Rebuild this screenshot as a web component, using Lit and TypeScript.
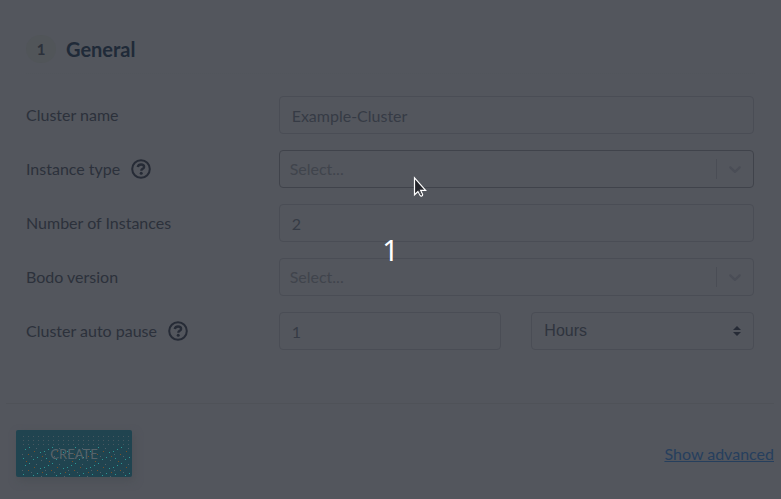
import { LitElement, html, css } from "lit";
import { customElement } from "lit/decorators.js";

const helpIcon = html`<svg class="help" viewBox="0 0 20 20" aria-hidden="true">
  <circle cx="10" cy="10" r="8.8" fill="none" stroke="currentColor" stroke-width="2" />
  <path d="M6.7 8C7.2 6.300 8.300 5.500 10 5.500c1.800 0 3.100.9 3.100 2.400 0 2-2.700 1.900-2.800 3.800" fill="none" stroke="currentColor" stroke-width="2.400" />
  <circle cx="10.200" cy="14.200" r="1.500" fill="currentColor" />
</svg>`;

const chevron = html`<svg class="chevron" viewBox="0 0 20 20" aria-hidden="true">
  <path fill="currentColor" d="M4.516 7.548c0.436-0.446 1.043-0.481 1.576 0l3.908 3.747 3.908-3.747c0.533-0.481 1.141-0.446 1.574 0 0.436 0.445 0.408 1.197 0 1.615-0.406 0.418-4.695 4.502-4.695 4.502-0.217 0.223-0.502 0.335-0.787 0.335s-0.57-0.112-0.789-0.335c0 0-4.287-4.084-4.695-4.502s-0.436-1.17 0-1.615z" />
</svg>`;

@customElement("app-root")
export class AppRoot extends LitElement {
  static styles = css`
    :host {
      display: block;
      position: relative;
      min-height: 100vh;
      background: #53565d;
      color: #2c313b;
      font: 16px/24px Lato, "Open Sans", sans-serif;
    }
    * {
      box-sizing: border-box;
    }
    .heading {
      display: flex;
      align-items: center;
      gap: 10px;
      padding: 35px 26px 10px;
    }
    .step {
      display: grid;
      place-items: center;
      width: 30px;
      height: 28px;
      border-radius: 50%;
      background: #515559;
      font-weight: 700;
      font-size: 15px;
    }
    h2 {
      margin: 0;
      font-size: 20px;
      line-height: 28px;
      font-weight: 700;
      color: #202a38;
    }
    .rule {
      height: 0;
      margin: 0 26px;
      border: 0;
      border-top: 1px dotted #51555b;
    }
    .fields {
      display: grid;
      gap: 16px;
      padding: 22px 12px 53px 11px;
    }
    .row {
      display: grid;
      grid-template-columns: 1fr 2fr;
      align-items: center;
    }
    .label {
      display: flex;
      align-items: center;
      gap: 11px;
      padding: 0 15px;
    }
    .control {
      display: grid;
      grid-auto-flow: column;
      grid-auto-columns: 1fr;
      gap: 30px;
      padding: 0 15px;
    }
    .help {
      width: 20px;
      height: 20px;
      color: #262b36;
    }
    input,
    select {
      width: 100%;
      min-width: 0;
      height: 38px;
      margin: 0;
      border: 1px solid #4a4d55;
      border-radius: 4px;
      background: transparent;
      color: #363b45;
      font: inherit;
      appearance: none;
      outline: none;
    }
    input {
      padding: 0 12px;
    }
    select {
      padding: 0 10px;
    }
    .picker {
      position: relative;
    }
    .picker select {
      color: #40444c;
    }
    .picker.active select {
      border-color: #40434b;
    }
    .picker.unit select {
      padding: 0 12px;
      color: #2f343e;
      font-family: "Liberation Sans", Arial, sans-serif;
    }
    .indicator {
      position: absolute;
      top: 9px;
      right: 0;
      display: grid;
      place-items: center;
      width: 38px;
      height: 20px;
      padding-right: 2px;
      border-left: 1px solid #4a4d55;
      color: #4a4d56;
      pointer-events: none;
    }
    .chevron {
      width: 20px;
      height: 20px;
    }
    .sorter {
      position: absolute;
      top: 14px;
      right: 13px;
      width: 8px;
      height: 10px;
      color: #262b36;
      pointer-events: none;
    }
    .foot {
      display: flex;
      align-items: center;
      justify-content: space-between;
      margin: 0 7px 0 6px;
      padding: 26px 0 20px 10px;
      border-top: 1px solid #4f5258;
    }
    button {
      position: relative;
      width: 116px;
      height: 47px;
      border: 0;
      border-radius: 2px;
      background: #204450;
      box-shadow: 2px 4px 8px #4c5056;
      color: #56636a;
      font: 13px/20px Lato, sans-serif;
    }
    .grain {
      position: absolute;
      inset: 0;
      width: 100%;
      height: 100%;
    }
    .caption {
      position: relative;
    }
    a {
      color: #263f5d;
      text-decoration: underline;
    }
    .count {
      position: absolute;
      inset: 0;
      display: grid;
      place-items: center;
      color: #fff;
      font: 29px/40px "Noto Sans", "Open Sans", sans-serif;
      pointer-events: none;
    }
    .cursor {
      position: absolute;
      left: 413px;
      top: 176px;
      width: 14px;
      height: 22px;
      pointer-events: none;
    }
  `;

  private picker(id: string, active = false) {
    return html`<div class="control">
      <div class="picker ${active ? "active" : ""}">
        <select id=${id}><option>Select...</option></select>
        <span class="indicator">${chevron}</span>
      </div>
    </div>`;
  }

  render() {
    return html`
      <form @submit=${(e: Event) => e.preventDefault()}>
        <div class="heading"><span class="step">1</span><h2>General</h2></div>
        <hr class="rule" />
        <div class="fields">
          <div class="row">
            <div class="label"><label for="name">Cluster name</label></div>
            <div class="control"><input id="name" type="text" value="Example-Cluster" /></div>
          </div>
          <div class="row">
            <div class="label"><label for="type">Instance type</label>${helpIcon}</div>
            ${this.picker("type", true)}
          </div>
          <div class="row">
            <div class="label"><label for="count">Number of Instances</label></div>
            <div class="control"><input id="count" type="text" inputmode="numeric" value="2" /></div>
          </div>
          <div class="row">
            <div class="label"><label for="version">Bodo version</label></div>
            ${this.picker("version")}
          </div>
          <div class="row">
            <div class="label"><label for="pause">Cluster auto pause</label>${helpIcon}</div>
            <div class="control">
              <input id="pause" type="text" inputmode="numeric" value="1" />
              <div class="picker unit">
                <select aria-label="Pause unit"><option>Hours</option></select>
                <svg class="sorter" viewBox="0 0 8 10" aria-hidden="true">
                  <path fill="currentColor" d="M4 0l4 4H0zM0 6h8l-4 4z" />
                </svg>
              </div>
            </div>
          </div>
        </div>
        <div class="foot">
          <button type="submit">
            <svg class="grain" shape-rendering="crispEdges" aria-hidden="true">
              <defs>
                <pattern id="top" width="5" height="4" patternUnits="userSpaceOnUse">
                  <path d="M2 2h1v1H2z" fill="#47575f" />
                </pattern>
                <pattern id="low" width="23" height="16" patternUnits="userSpaceOnUse">
                  <path d="M1 6h1v1H1zM5 5h1v1H5zM9 3h1v1H9zM13 1h1v1h-1zM17 13h1v1h-1zM21 11h1v1h-1zM7 12h1v1H7z" fill="#2c9794" />
                  <path d="M3 10h1v1H3zM12 8h1v1h-1zM18 5h1v1h-1zM10 15h1v1h-1z" fill="#7c5128" />
                  <path d="M6 8h1v1H6zM15 10h1v1h-1zM20 2h1v1h-1zM2 14h1v1H2z" fill="#50606a" />
                </pattern>
              </defs>
              <rect x="4" y="4" width="109" height="12" fill="url(#top)" />
              <rect x="6" y="16" width="109" height="31" fill="url(#low)" />
            </svg>
            <span class="caption">CREATE</span>
          </button>
          <a href="#advanced">Show advanced</a>
        </div>
      </form>
      <div class="count">1</div>
      <svg class="cursor" viewBox="0 0 14 22" aria-hidden="true">
        <path d="M1.500 1.800v17l3.500-3.300 2.300 4.200c.8.9 2.500.1 2.300-1.200l-2-4.200h5z" fill="#24252b" stroke="#fff" stroke-width="1.200" />
        <path d="M5.500 15.200l2 3.800 1-.5-1.800-3.800z" fill="#53565d" />
      </svg>
    `;
  }
}
